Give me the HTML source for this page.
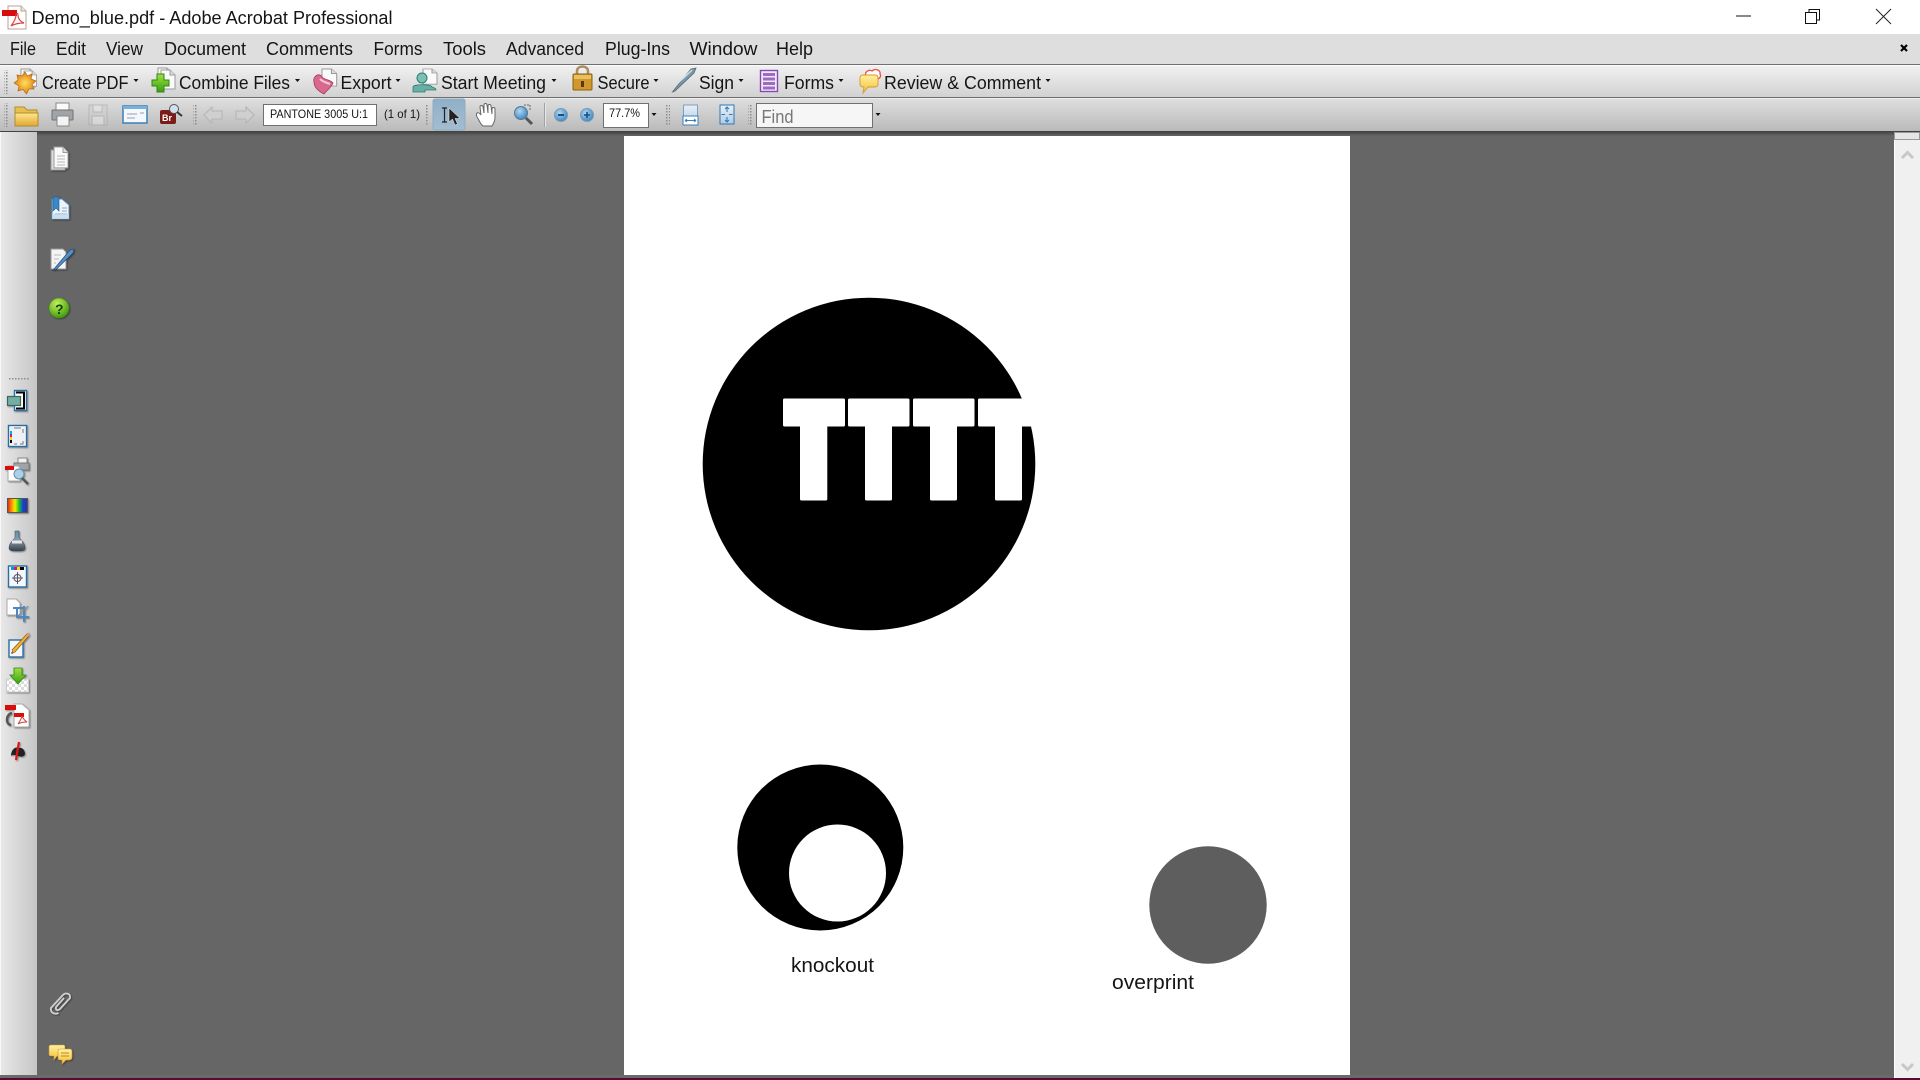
<!DOCTYPE html>
<html lang="en"><head><meta charset="utf-8"><title>Demo_blue.pdf - Adobe Acrobat Professional</title>
<style>html,body{margin:0;padding:0;background:#666;overflow:hidden}svg{display:block}text{font-family:"Liberation Sans",sans-serif;fill:#151515}</style></head>
<body>
<svg xmlns="http://www.w3.org/2000/svg" width="1920" height="1080" viewBox="0 0 1920 1080">
<defs>
<linearGradient id="t1" x1="0" y1="0" x2="0" y2="1"><stop offset="0" stop-color="#f0f0f0"/><stop offset="1" stop-color="#d2d2d2"/></linearGradient>
<linearGradient id="t2" x1="0" y1="0" x2="0" y2="1"><stop offset="0" stop-color="#dedede"/><stop offset="1" stop-color="#bababa"/></linearGradient>
<linearGradient id="sh" x1="0" y1="0" x2="0" y2="1"><stop offset="0" stop-color="#3e3e3e"/><stop offset="1" stop-color="#666"/></linearGradient>
<linearGradient id="lp" x1="0" y1="0" x2="1" y2="0"><stop offset="0" stop-color="#e8e8e8"/><stop offset="1" stop-color="#c6c6c6"/></linearGradient>
<linearGradient id="hl" x1="0" y1="0" x2="0" y2="1"><stop offset="0" stop-color="#8fb0c8"/><stop offset="1" stop-color="#a3bdd0"/></linearGradient>
<linearGradient id="gold" x1="0" y1="0" x2="0" y2="1"><stop offset="0" stop-color="#ffe690"/><stop offset="1" stop-color="#e0a830"/></linearGradient>
<linearGradient id="yel" x1="0" y1="0" x2="0" y2="1"><stop offset="0" stop-color="#fff0a0"/><stop offset="1" stop-color="#f4c030"/></linearGradient>
<linearGradient id="grn" x1="0" y1="0" x2="0" y2="1"><stop offset="0" stop-color="#a0e040"/><stop offset="1" stop-color="#38a010"/></linearGradient>
<linearGradient id="rain" x1="0" y1="0" x2="1" y2="0"><stop offset="0" stop-color="#e02020"/><stop offset=".2" stop-color="#ff9000"/><stop offset=".38" stop-color="#f0f000"/><stop offset=".58" stop-color="#20c020"/><stop offset=".78" stop-color="#1040e0"/><stop offset="1" stop-color="#403080"/></linearGradient>
<linearGradient id="blu" x1="0" y1="0" x2="0" y2="1"><stop offset="0" stop-color="#e8f0f8"/><stop offset="1" stop-color="#b0cce4"/></linearGradient>
<linearGradient id="ink" x1="0" y1="0" x2="0" y2="1"><stop offset="0" stop-color="#5c90b0"/><stop offset=".45" stop-color="#8c9ca8"/><stop offset="1" stop-color="#34404a"/></linearGradient>
<radialGradient id="ball" cx=".4" cy=".3" r=".8"><stop offset="0" stop-color="#c8f060"/><stop offset="1" stop-color="#309000"/></radialGradient>
<radialGradient id="star" cx=".5" cy=".5" r=".5"><stop offset="0" stop-color="#ffe060"/><stop offset="1" stop-color="#e08010"/></radialGradient>
<radialGradient id="zb" cx=".4" cy=".35" r=".7"><stop offset="0" stop-color="#b0d8f4"/><stop offset="1" stop-color="#3a80c0"/></radialGradient>
<pattern id="grip" width="3" height="3" patternUnits="userSpaceOnUse"><rect width="1.5" height="1.5" fill="#8c8c8c"/></pattern>
<pattern id="chk" width="6" height="6" patternUnits="userSpaceOnUse"><rect width="6" height="6" fill="#fff"/><rect width="3" height="3" fill="#ddd"/><rect x="3" y="3" width="3" height="3" fill="#ddd"/></pattern>
<filter id="ds" x="-20%" y="-20%" width="150%" height="150%"><feDropShadow dx="1" dy="1" stdDeviation=".8" flood-color="#000" flood-opacity=".4"/></filter>
<g id="doc"><path d="M0 0H9L14 5V19H0Z" fill="#fafafa" stroke="#9a9a9a"/><path d="M9 0V5H14" fill="#ddd" stroke="#9a9a9a"/></g>
</defs>

<!-- chrome backgrounds -->
<rect width="1920" height="34" fill="#fff"/>
<rect y="34" width="1920" height="30" fill="#dedede"/>
<rect y="64" width="1920" height="1" fill="#707070"/><rect y="65" width="1920" height="1" fill="#fafafa"/>
<rect y="66" width="1920" height="31" fill="url(#t1)"/>
<rect y="97" width="1920" height="1" fill="#707070"/><rect y="98" width="1920" height="1" fill="#eee"/>
<rect y="99" width="1920" height="32" fill="url(#t2)"/>
<rect y="131" width="1920" height="5" fill="url(#sh)"/>
<rect y="136" width="1920" height="944" fill="#666"/>

<!-- left panel -->
<rect y="132" width="37" height="946" fill="url(#lp)"/>
<rect y="132" width="1" height="946" fill="#f8f8f8"/>

<!-- page -->
<rect x="624" y="136" width="726" height="939" fill="#fff"/>
<circle cx="869" cy="464" r="166.300" fill="#000"/>
<g fill="#fff">
<path d="M783 400a1.500 1.500 0 0 1 1.500-1.500H843.500a1.500 1.500 0 0 1 1.500 1.500V425a1.500 1.500 0 0 1-1.500 1.500H827.300V499a1.500 1.500 0 0 1-1.500 1.500H801.500a1.500 1.500 0 0 1-1.500-1.500V426.500H784.500a1.500 1.500 0 0 1-1.500-1.500Z"/>
<path d="M848 400a1.500 1.500 0 0 1 1.500-1.500H908a1.500 1.500 0 0 1 1.500 1.500V425a1.500 1.500 0 0 1-1.500 1.500H892V499a1.500 1.500 0 0 1-1.500 1.500H866.500a1.500 1.500 0 0 1-1.500-1.500V426.500H849.500a1.500 1.500 0 0 1-1.500-1.500Z"/>
<path d="M913 400a1.500 1.500 0 0 1 1.500-1.500H973a1.500 1.500 0 0 1 1.500 1.500V425a1.500 1.500 0 0 1-1.500 1.500H957V499a1.500 1.500 0 0 1-1.500 1.500H931.500a1.500 1.500 0 0 1-1.500-1.500V426.500H914.500a1.500 1.500 0 0 1-1.500-1.500Z"/>
<path d="M978 400a1.500 1.500 0 0 1 1.500-1.500H1042V426.500H1022V499a1.500 1.500 0 0 1-1.500 1.500H996.500a1.500 1.500 0 0 1-1.500-1.500V426.500H979.500a1.500 1.500 0 0 1-1.500-1.500Z"/>
</g>
<circle cx="820.300" cy="847.500" r="83" fill="#000"/>
<circle cx="837.500" cy="873" r="48.500" fill="#fff"/>
<circle cx="1208" cy="905" r="58.700" fill="#5e5e5e"/>
<text x="791" y="972" font-size="20.500" textLength="83" lengthAdjust="spacingAndGlyphs">knockout</text>
<text x="1112" y="989" font-size="20.500" textLength="82" lengthAdjust="spacingAndGlyphs">overprint</text>

<!-- bottom -->
<rect y="1075" width="1920" height="3" fill="#6a6a6a"/>
<rect y="1078" width="1920" height="2" fill="#5a0a34"/>

<!-- scrollbar -->
<rect x="1894" y="132" width="26" height="946" fill="#f0f0f0"/>
<rect x="1894" y="136" width="1" height="942" fill="#fff"/>
<rect x="1894.500" y="132.500" width="25" height="7" fill="#e6e6e6" stroke="#9a9a9a"/>
<path d="M1902 158L1907.500 152.500L1913 158" fill="none" stroke="#c8c8c8" stroke-width="3"/>
<path d="M1902 1064L1907.500 1069.500L1913 1064" fill="none" stroke="#c8c8c8" stroke-width="3"/>

<!-- title bar -->
<g transform="translate(2,2)">
<path d="M6 4H19L24 9V27H6Z" fill="#fff" stroke="#b9a090"/>
<path d="M19 4V9H24" fill="#f0e8e0" stroke="#b9a090"/>
<rect x="0" y="8" width="15" height="6" fill="#d80c0c"/>
<path d="M9 24C12 20 14 16 14 13C14 11 16 11 16 13C16 17 19 20 22 21C20 21 14 21 9 24Z" fill="none" stroke="#e04040" stroke-width="1.200"/>
</g>
<text x="31.500" y="24" font-size="18" textLength="361" lengthAdjust="spacingAndGlyphs">Demo_blue.pdf - Adobe Acrobat Professional</text>
<rect x="1736" y="15.500" width="15" height="1" fill="#111"/>
<g fill="none" stroke="#111"><rect x="1805.500" y="12.500" width="11" height="11"/><path d="M1809 12.500V9.500H1819.500V20H1816.500"/></g>
<path d="M1876 9L1891 24M1891 9L1876 24" stroke="#222" stroke-width="1" fill="none"/>
<path d="M1901 45L1907 51M1907 45L1901 51" stroke="#000" stroke-width="2.200"/>

<!-- menu -->
<g font-size="18">
<text x="10" y="55" textLength="26" lengthAdjust="spacingAndGlyphs">File</text>
<text x="56" y="55" textLength="30" lengthAdjust="spacingAndGlyphs">Edit</text>
<text x="106" y="55" textLength="37" lengthAdjust="spacingAndGlyphs">View</text>
<text x="164" y="55" textLength="82" lengthAdjust="spacingAndGlyphs">Document</text>
<text x="266" y="55" textLength="87" lengthAdjust="spacingAndGlyphs">Comments</text>
<text x="373.500" y="55" textLength="49" lengthAdjust="spacingAndGlyphs">Forms</text>
<text x="443" y="55" textLength="43" lengthAdjust="spacingAndGlyphs">Tools</text>
<text x="506" y="55" textLength="78" lengthAdjust="spacingAndGlyphs">Advanced</text>
<text x="605" y="55" textLength="65" lengthAdjust="spacingAndGlyphs">Plug-Ins</text>
<text x="689.500" y="55" textLength="68" lengthAdjust="spacingAndGlyphs">Window</text>
<text x="776" y="55" textLength="37" lengthAdjust="spacingAndGlyphs">Help</text>

<!-- toolbar 1 text -->
<text x="42" y="89" textLength="86.500" lengthAdjust="spacingAndGlyphs">Create PDF</text>
<text x="179" y="89" textLength="111" lengthAdjust="spacingAndGlyphs">Combine Files</text>
<text x="340.500" y="89" textLength="51" lengthAdjust="spacingAndGlyphs">Export</text>
<text x="441" y="89" textLength="105" lengthAdjust="spacingAndGlyphs">Start Meeting</text>
<text x="597.500" y="89" textLength="52" lengthAdjust="spacingAndGlyphs">Secure</text>
<text x="699" y="89" textLength="35" lengthAdjust="spacingAndGlyphs">Sign</text>
<text x="784" y="89" textLength="50" lengthAdjust="spacingAndGlyphs">Forms</text>
<text x="884" y="89" textLength="157" lengthAdjust="spacingAndGlyphs">Review &amp; Comment</text>
</g>
<g fill="#111">
<path d="M133.500 79H138.500L136 82Z"/><path d="M295 79H300L297.500 82Z"/><path d="M395.500 79H400.500L398 82Z"/><path d="M551.500 79H556.500L554 82Z"/><path d="M653.500 79H658.500L656 82Z"/><path d="M738.500 79H743.500L741 82Z"/><path d="M838.500 79H843.500L841 82Z"/><path d="M1045.500 79H1050.500L1048 82Z"/>
<path d="M651.500 113H656.500L654 116Z"/><path d="M875.500 113H880.500L878 116Z"/>
</g>
<rect x="4" y="70" width="5" height="24" fill="url(#grip)"/>
<rect x="4" y="103" width="5" height="24" fill="url(#grip)"/>
<rect x="193" y="104" width="4" height="22" fill="url(#grip)"/>
<rect x="425" y="104" width="4" height="22" fill="url(#grip)"/>
<rect x="666" y="104" width="4" height="22" fill="url(#grip)"/>
<rect x="748" y="104" width="4" height="22" fill="url(#grip)"/>
<rect x="544" y="103" width="1" height="24" fill="#a0a0a0"/><rect x="545" y="103" width="1" height="24" fill="#e8e8e8"/>

<!-- toolbar 1 icons -->
<g transform="translate(21,69)"><use href="#doc" transform="scale(1,.95)"/></g><g transform="translate(24,71)"><use href="#doc" transform="scale(.9,.8)"/></g>
<g transform="translate(25,83)"><path d="M0-11L2.500-7L7-9L6-4L11-2L7 1.500L9 6L4 6L1.500 11L-2 6.500L-7 8L-6 3L-11 0L-7-3L-8-8L-3-7Z" fill="url(#star)" stroke="#b86810" stroke-width=".7"/></g>
<g transform="translate(158,68)"><use href="#doc" transform="scale(1,.9)"/></g><g transform="translate(161,70)"><use href="#doc"/></g>
<path d="M158 80H163V74H170V80H175V86H170V92H163V86H158Z" transform="translate(-6,0)" fill="url(#grn)" stroke="#2c8810" stroke-width="1"/>
<g transform="translate(322,69)"><use href="#doc" transform="scale(1.050,.9)"/></g>
<path d="M314 82C312 76 320 72 322 77C325 80 331 80 333 83C331 88 327 90 324 94C318 91 314 87 314 82Z" fill="#d8688c" stroke="#a83860" stroke-width=".8"/>
<path d="M320 79C323 82 327 83 330 84" stroke="#f4c8d4" fill="none" stroke-width="2"/>
<g transform="translate(423,69)"><use href="#doc" transform="scale(1,.8)"/></g>
<circle cx="422" cy="78" r="5" fill="#7cc0b4" stroke="#2c7c70"/>
<path d="M413 92V87C413 84 431 84 432 87C434 88 436 88 436 90H425V92Z" fill="#68b0a4" stroke="#2c7c70" stroke-width=".8"/>
<path d="M577 75V71C577 65 588 65 588 71V75" fill="none" stroke="#a89060" stroke-width="2.500"/>
<rect x="573" y="74" width="19" height="16" rx="1" fill="#d0982c" stroke="#8c6010"/>
<rect x="574" y="75" width="17" height="4" fill="#e8c060"/>
<rect x="581" y="81" width="3" height="6" fill="#5a3808"/>
<path d="M674 90L672.500 92L675 91L694 73L696 68L691 69Z" fill="#7c98ac" stroke="#58686c" stroke-width=".8"/>
<path d="M676 85L692 70" stroke="#d0e0ec" stroke-width="1.500"/>
<rect x="760.500" y="70.500" width="17" height="21" fill="#f0e8f8" stroke="#8c48b0" stroke-width="1.400"/>
<g fill="#9c6cc0"><rect x="763" y="73" width="12" height="3"/><rect x="763" y="77.500" width="12" height="3"/><rect x="763" y="82" width="12" height="3"/><rect x="763" y="86.500" width="12" height="3"/></g>
<path d="M866 76C864 72 869 69 872 71C875 68 881 70 880 74C882 77 878 80 875 79" fill="#fff" stroke="#e85040" stroke-width="1.300"/>
<path d="M860 78C860 75 862 75 864 75H875C878 75 878 77 878 79V84C878 87 876 87 874 87H868L863 93L864 87C861 87 860 86 860 84Z" fill="url(#yel)" stroke="#d8982c" stroke-width=".9"/>

<!-- toolbar 2 icons -->
<path d="M15 107H24L27 110H37V125H15Z" fill="#e8c050" stroke="#b08c30"/>
<path d="M15 113H38V126H15Z" fill="url(#gold)" stroke="#b08c30"/>
<rect x="56" y="103" width="13" height="8" fill="#fafafa" stroke="#888"/>
<rect x="52" y="110" width="21" height="10" rx="1" fill="#a0a4a8" stroke="#707070"/>
<rect x="57" y="116" width="12" height="10" fill="#f4f4f4" stroke="#888"/>
<g opacity=".45"><rect x="89" y="105" width="18" height="20" fill="#d0d0d0" stroke="#999"/><rect x="93" y="105" width="9" height="7" fill="#eee" stroke="#999"/><rect x="92" y="116" width="12" height="9" fill="#eee" stroke="#999"/></g>
<rect x="123" y="106" width="24" height="17" fill="#f4f8fc" stroke="#3a80b8" stroke-width="1.500"/>
<rect x="123" y="106" width="24" height="3" fill="#7cb0d8"/>
<path d="M127 114H137M127 118H135M140 113H144" stroke="#90a0b0"/>
<rect x="160" y="110" width="16" height="14" rx="2" fill="#7c1c18"/>
<text x="162" y="121" font-size="9" font-weight="bold" style="fill:#fff">Br</text>
<circle cx="174" cy="109" r="4.500" fill="#d0e0f0" stroke="#555"/>
<path d="M177 112L182 116" stroke="#333" stroke-width="2"/>
<path d="M204 115L212 107V111H222V119H212V123Z" fill="#cfcfcf" stroke="#b4b4b4"/>
<path d="M254 115L246 107V111H236V119H246V123Z" fill="#cfcfcf" stroke="#b4b4b4"/>
<rect x="263.500" y="104.500" width="113" height="21" fill="#fff" stroke="#707070"/>
<text x="270" y="118" font-size="12" textLength="98" lengthAdjust="spacingAndGlyphs">PANTONE 3005 U:1</text>
<text x="384" y="118" font-size="12" textLength="36" lengthAdjust="spacingAndGlyphs">(1 of 1)</text>
<rect x="433" y="99" width="32" height="31" rx="2" fill="url(#hl)" stroke="#8eacc2"/>
<path d="M442 108H447M442 122H447M444.500 108V122" stroke="#222" fill="none" stroke-width="1.200"/>
<path d="M449 108V122L452.500 119L455 125L457.500 124L455 118.500H460Z" fill="#222" stroke="#eee" stroke-width=".5"/>
<path d="M481 124C478 118 475 115 477 113C479 112 481 115 481 115L480 107C480 105 483 105 483 107L484 113V105C484 103 487 103 487 105L488 113V106C488 104 491 104 491 106L492 114V109C492 107 495 107 495 109V117C495 122 493 124 492 126H483Z" fill="#fff" stroke="#666" stroke-width="1"/>
<circle cx="521" cy="113" r="6.500" fill="url(#zb)" stroke="#58788c"/>
<path d="M526 118L532 124" stroke="#555" stroke-width="3"/>
<path d="M524 105H530V110" fill="none" stroke="#666" stroke-dasharray="2 1"/>
<circle cx="561" cy="115" r="6.500" fill="url(#zb)" stroke="#7c9cb4"/><rect x="558" y="114" width="6" height="2" fill="#1c4c80"/>
<circle cx="587" cy="115" r="6.500" fill="url(#zb)" stroke="#7c9cb4"/><path d="M584 115H590M587 112V118" stroke="#1c4c80" stroke-width="1.600"/>
<rect x="603.500" y="103.500" width="45" height="24" fill="#fff" stroke="#707070"/>
<text x="609" y="117" font-size="12" textLength="31" lengthAdjust="spacingAndGlyphs">77.7%</text>
<rect x="683.500" y="105" width="14" height="20" fill="url(#blu)" stroke="#7ca0c0"/>
<rect x="683" y="116" width="15" height="9" fill="#fff" stroke="#3a80b8"/>
<path d="M685 120.500H696M685 120.500L687 119M685 120.500L687 122M696 120.500L694 119M696 120.500L694 122" stroke="#3a80b8" fill="none"/>
<rect x="720" y="105" width="14" height="19" fill="url(#blu)" stroke="#2c78b0"/>
<path d="M727 107V112M725 109L727 107L729 109M727 122V117M725 120L727 122L729 120M721.500 114.500H725M729 114.500H732.500" stroke="#2c78b0" fill="none"/>
<rect x="756.500" y="103.500" width="116" height="24" fill="#f6f6f6" stroke="#707070"/>
<text x="761.500" y="123" font-size="18" textLength="32" lengthAdjust="spacingAndGlyphs" style="fill:#777">Find</text>

<!-- nav panel icons -->
<g filter="url(#ds)">
<g transform="translate(51,147)"><rect x="0" y="3" width="14" height="20" fill="#ddd" stroke="#999"/><g transform="translate(3,0)"><use href="#doc" transform="scale(1,1.100)"/></g><path d="M6 9H14M6 12H14M6 15H14M6 18H14" stroke="#b8b8b8"/></g>
<g transform="translate(52,197)"><path d="M0 2H10L17 8V22H0Z" fill="#eef4fa" stroke="#5c8cb4"/><path d="M1 0H7V14L4 11L1 14Z" fill="#3a88c8" stroke="#1c5c94" stroke-width=".6"/><path d="M10 11H15M10 14H15M3 17H15" stroke="#8cacc8"/><rect x="0" y="17" width="17" height="5" fill="#c4d8ec" opacity=".8"/></g>
<g transform="translate(51,249)"><path d="M0 0H12L15 3V20H0Z" fill="#f4f4f4" stroke="#999"/><path d="M3 6H10M3 10H8M3 14H5" stroke="#bbb"/><path d="M3 20L2 21L5 20.500L22 4L23 0L19 1Z" fill="#5890c4" stroke="#1c4c78" stroke-width=".7"/></g>
<circle cx="59" cy="308" r="10" fill="url(#ball)" stroke="#3c8810" stroke-width=".6"/>
<path d="M58.500 1013C54 1015 50 1012 51 1008L62 996C65 992 71 993 70 998L60 1009C58 1011 55 1010 56 1007L64 998" fill="none" stroke="#d0d0d0" stroke-width="1.800"/>
<path d="M51 1045H63C65 1045 65 1046 65 1048V1053C65 1055 64 1056 62 1056H57L54 1060V1056H51C49 1056 49 1055 49 1053V1048C49 1046 49 1045 51 1045Z" fill="url(#yel)" stroke="#c89838" stroke-width=".6"/>
<path d="M60 1049H70C72 1049 72 1051 72 1052V1057C72 1059 71 1060 69 1060H66L62 1064V1060H60C58 1060 58 1059 58 1057V1052C58 1050 58 1049 60 1049Z" fill="url(#yel)" stroke="#c89838" stroke-width=".6"/>
<path d="M61 1053H69M61 1056H69" stroke="#c08820"/>
</g>
<text x="55" y="314" font-size="14" font-weight="bold" style="fill:#064a06">?</text>

<!-- dock -->
<rect x="9" y="378" width="21" height="3" fill="url(#grip)"/>
<g filter="url(#ds)">
<rect x="14.500" y="390.500" width="12" height="20" fill="#fff" stroke="#2c6ca4" stroke-width="1.400"/>
<path d="M16 392.500H24V408.500H16" fill="none" stroke="#000" stroke-width="2"/>
<rect x="7.500" y="396.500" width="13" height="9" fill="#74aca4" stroke="#386860" stroke-width="1.200"/>
<rect x="8.500" y="425.500" width="18" height="21" fill="#f8fbff" stroke="#2c6ca4" stroke-width="1.400"/>
<rect x="10" y="427" width="15" height="18" fill="#eef2f6"/>
<rect x="10" y="431" width="2" height="3" fill="#00b0e0"/><rect x="10" y="434" width="2" height="3" fill="#e0108c"/><rect x="10" y="437" width="2" height="3" fill="#f0e000"/><rect x="10" y="440" width="2" height="3" fill="#000"/>
<path d="M14 428H21M23 433V429M23 441V444H20M14 444H17" stroke="#777" fill="none"/>
<rect x="18" y="458" width="9" height="5" fill="#f0f0f0" stroke="#888"/><rect x="14" y="463" width="15" height="7" fill="#a0a4a8" stroke="#777"/>
<path d="M8 466H18L20 468V481H8Z" fill="#fff" stroke="#aaa"/><rect x="5" y="466" width="9" height="4" fill="#d80c0c"/>
<circle cx="19" cy="474" r="5" fill="#a8d0e8" stroke="#6c8ca0"/><path d="M22 478L28 484" stroke="#555" stroke-width="2.500"/>
<rect x="7.500" y="498.500" width="20" height="14" fill="url(#rain)" stroke="#555"/>
<path d="M15 531H19V537C19 539 25 542 25 548C25 551 22 551 17 551C12 551 9 551 9 548C9 542 15 539 15 537Z" fill="url(#ink)" stroke="#445" stroke-width=".5"/>
<path d="M12 542H22" stroke="#e4e8ec" stroke-width="3"/>
<rect x="8.500" y="566" width="18" height="21" fill="#f4f8fc" stroke="#2c6ca4" stroke-width="1.400"/>
<rect x="11" y="567" width="3" height="3" fill="#00a0e0"/><rect x="14" y="567" width="3" height="3" fill="#e0108c"/><rect x="17" y="567" width="3" height="3" fill="#f0e000"/><rect x="20" y="567" width="4" height="3" fill="#000"/>
<circle cx="17.500" cy="578" r="3.500" fill="none" stroke="#556"/><path d="M12 578H23M17.500 572V584" stroke="#556"/>
<path d="M7 599H16L20 603V615H7Z" fill="#fff" stroke="#aaa"/>
<path d="M13 608H24M24 622V606M17 607V617H29" stroke="#4888c4" stroke-width="2" fill="none"/><path d="M18 616L28 606" stroke="#888"/>
<rect x="9" y="640" width="14" height="17" fill="#f4f8fc" stroke="#2c6ca4" stroke-width="1.400"/>
<path d="M12 650L13 653L15 652L28 637L29 634L26 635Z" fill="#f0b030" stroke="#7c5010" stroke-width=".6"/>
<path d="M27 633L29 636" stroke="#e8889c" stroke-width="2"/>
<path d="M11 653H13" stroke="#333"/>
<rect x="6.500" y="679" width="22" height="13" fill="url(#chk)" stroke="#ccc"/>
<path d="M14 668H22V675H26L18 684L10 675H14Z" fill="url(#grn)" stroke="#2c8810" stroke-width=".8"/>
<path d="M14 704H22L29 710V727H14Z" fill="#fff" stroke="#aaa"/>
<rect x="5" y="705" width="11" height="5" fill="#d80c0c"/>
<rect x="14" y="713" width="10" height="4" fill="#d80c0c"/>
<path d="M18 724C20 721 22 718 22 716C23 718 25 721 27 722C24 722 21 722 18 724Z" fill="none" stroke="#d04040"/>
<path d="M12 713C6 714 5 724 11 725" fill="none" stroke="#555" stroke-width="2.500"/>
<path d="M11 756C11 750 15 746 19 748C23 747 25 751 25 754C24 757 21 757 18 756C15 755 13 754 11 756Z" fill="#222"/>
<path d="M19 742C18 747 17 753 16 760" stroke="#e01818" stroke-width="2.200" fill="none"/>
</g>
</svg>
</body></html>
